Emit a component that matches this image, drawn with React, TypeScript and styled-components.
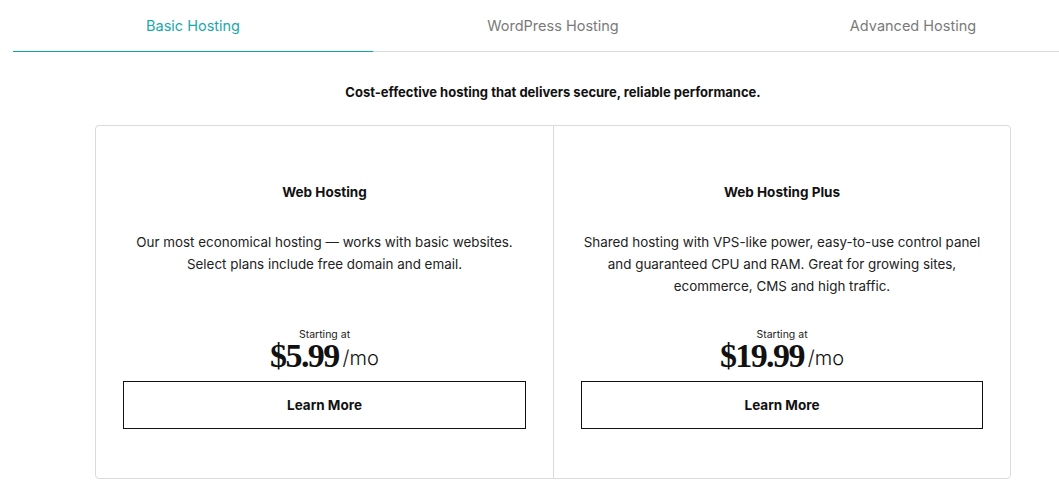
import React, { useState } from 'react'
import styled, { createGlobalStyle } from 'styled-components'

const GlobalStyle = createGlobalStyle`
  html, body {
    margin: 0;
    padding: 0;
    background: #fff;
    overflow: hidden;
  }
  body {
    font-family: 'Inter', 'Noto Sans', sans-serif;
    color: #111;
  }
`

const Page = styled.div`
  width: 1080px;
  margin-left: 13px;
  display: flex;
  flex-direction: column;
  align-items: center;
`

const TabBar = styled.div`
  width: 100%;
  display: flex;
`

const Tab = styled.div<{ $active: boolean }>`
  flex: 1;
  display: flex;
  flex-direction: column;
  align-items: center;
  font-size: 14.5px;
  color: ${({ $active }) => ($active ? '#1aa9a9' : '#7a7a7a')};
  cursor: pointer;
  user-select: none;
`

const TabLabel = styled.span`
  height: 51px;
  display: flex;
  align-items: center;
  padding-bottom: 1px;
  box-sizing: border-box;
`

const TabLine = styled.div<{ $active: boolean }>`
  align-self: stretch;
  height: 1px;
  background: ${({ $active }) => ($active ? '#0aa6a6' : '#d4dbe0')};
`

const Tagline = styled.p`
  margin: 31px 0 0;
  font-size: 13px;
  font-weight: 700;
  line-height: 18px;
  color: #111;
`

const Cards = styled.div`
  margin-top: 24px;
  width: 916px;
  display: grid;
  grid-template-columns: 1fr 1fr;
  border: 1px solid #d6dce1;
  border-radius: 4px;
  box-sizing: border-box;
`

const Card = styled.div`
  display: flex;
  flex-direction: column;
  align-items: center;
  padding: 56px 27px 49px 27px;
  text-align: center;
  & + & {
    border-left: 1px solid #d6dce1;
  }
`

const Title = styled.h3`
  margin: 0;
  font-size: 13.5px;
  font-weight: 700;
  line-height: 20px;
`

const Description = styled.p`
  margin: 29px 0 0;
  font-size: 13.4px;
  line-height: 22px;
  color: #222;
  min-height: 88px;
`

const Starting = styled.div`
  margin-top: 9px;
  font-size: 10.5px;
  line-height: 14px;
  color: #222;
`

const PriceRow = styled.div`
  display: flex;
  align-items: center;
  gap: 4px;
  height: 28px;
`

const Amount = styled.span`
  font-family: 'Liberation Serif', 'DejaVu Serif', serif;
  font-weight: 700;
  font-size: 34px;
  line-height: 28px;
  letter-spacing: -1.6px;
  color: #111;
`

const Per = styled.span`
  font-size: 20px;
  font-weight: 300;
  line-height: 22px;
  margin-top: 3px;
  color: #111;
`

const LearnMore = styled.button`
  margin-top: 11px;
  width: 100%;
  height: 48px;
  background: #fff;
  border: 1.5px solid #111;
  font-family: 'Inter', 'Noto Sans', sans-serif;
  font-size: 13.5px;
  font-weight: 700;
  color: #111;
  cursor: pointer;
`

const tabs = ['Basic Hosting', 'WordPress Hosting', 'Advanced Hosting']

const plans = [
  {
    title: 'Web Hosting',
    description: ['Our most economical hosting — works with basic websites.', 'Select plans include free domain and email.'],
    price: '$5.99',
  },
  {
    title: 'Web Hosting Plus',
    description: [
      'Shared hosting with VPS-like power, easy-to-use control panel',
      'and guaranteed CPU and RAM. Great for growing sites,',
      'ecommerce, CMS and high traffic.',
    ],
    price: '$19.99',
  },
]

export default function App() {
  const [active, setActive] = useState(0)
  return (
    <>
      <GlobalStyle />
      <Page>
        <TabBar>
          {tabs.map((t, i) => (
            <Tab key={t} $active={i === active} onClick={() => setActive(i)}>
              <TabLabel>{t}</TabLabel>
              <TabLine $active={i === active} />
            </Tab>
          ))}
        </TabBar>
        <Tagline>Cost-effective hosting that delivers secure, reliable performance.</Tagline>
        <Cards>
          {plans.map((plan) => (
            <Card key={plan.title}>
              <Title>{plan.title}</Title>
              <Description>
                {plan.description.map((line, i) => (
                  <React.Fragment key={i}>
                    {line}
                    {i < plan.description.length - 1 && <br />}
                  </React.Fragment>
                ))}
              </Description>
              <Starting>Starting at</Starting>
              <PriceRow>
                <Amount>{plan.price}</Amount>
                <Per>/mo</Per>
              </PriceRow>
              <LearnMore>Learn More</LearnMore>
            </Card>
          ))}
        </Cards>
      </Page>
    </>
  )
}
